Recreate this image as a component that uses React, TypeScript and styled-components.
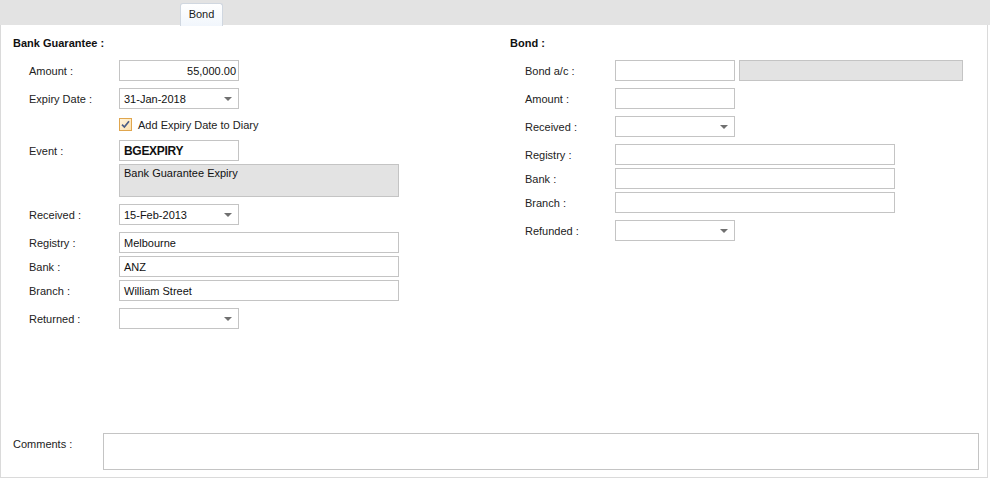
import React from "react";
import styled, { createGlobalStyle } from "styled-components";

const GlobalStyle = createGlobalStyle`
  html, body {
    margin: 0;
    padding: 0;
    background: #ffffff;
  }
  body {
    font-family: "Liberation Sans", Arial, sans-serif;
    font-size: 11px;
    color: #1f1f1f;
  }
`;

const Screen = styled.div`
  width: 990px;
  height: 478px;
  display: flex;
  flex-direction: column;
  background: #ffffff;
  overflow: hidden;
`;

const TabStrip = styled.div`
  height: 25px;
  flex: none;
  background: #e3e3e3;
  display: flex;
  align-items: flex-end;
  padding-left: 180px;
  box-sizing: border-box;
`;

const Tab = styled.div`
  width: 43px;
  height: 23px;
  box-sizing: border-box;
  border: 1px solid #d0d7e0;
  border-bottom: none;
  border-radius: 3px 3px 0 0;
  background: linear-gradient(#ffffff, #f1f6fc);
  display: flex;
  align-items: center;
  justify-content: center;
  padding-bottom: 2px;
  color: #1a1a1a;
  margin-bottom: -1px;
  position: relative;
  z-index: 1;
`;

const Panel = styled.div`
  flex: 1;
  margin-right: 2px;
  border: 1px solid #dadada;
  border-top: none;
  display: flex;
  flex-direction: column;
  padding-bottom: 7px;
`;

const Columns = styled.div`
  display: flex;
  flex: 1;
`;

const Column = styled.div<{ $width?: number; $pad: number }>`
  ${(p) => (p.$width ? `width: ${p.$width}px;` : "flex: 1;")}
  flex-shrink: 0;
  box-sizing: border-box;
  padding: 12px 0 0 ${(p) => p.$pad}px;
  display: flex;
  flex-direction: column;
`;

const SectionTitle = styled.div`
  font-weight: bold;
  height: 13px;
  line-height: 13px;
  color: #111;
  margin-bottom: 10px;
`;

const Row = styled.div<{ $top?: number; $h?: number; $indent?: number }>`
  display: flex;
  align-items: center;
  margin-top: ${(p) => p.$top ?? 0}px;
  height: ${(p) => p.$h ?? 21}px;
  padding-left: ${(p) => p.$indent ?? 16}px;
`;

const Label = styled.div`
  width: 90px;
  flex: none;
  color: #222;
`;

const Spacer = styled.div`
  width: 90px;
  flex: none;
`;

const Field = styled.div<{
  $w: number;
  $h?: number;
  $grey?: boolean;
  $right?: boolean;
  $bold?: boolean;
  $top?: boolean;
}>`
  width: ${(p) => p.$w}px;
  height: ${(p) => p.$h ?? 21}px;
  box-sizing: border-box;
  border: 1px solid #c4c4c4;
  background: ${(p) => (p.$grey ? "#e3e3e3" : "#ffffff")};
  display: flex;
  align-items: ${(p) => (p.$top ? "flex-start" : "center")};
  justify-content: ${(p) => (p.$right ? "flex-end" : "flex-start")};
  padding: ${(p) => (p.$top ? "2px 4px" : p.$right ? "0 2px 0 4px" : "0 4px")};
  font-weight: ${(p) => (p.$bold ? "bold" : "normal")};
  font-size: ${(p) => (p.$bold ? "12px" : "11px")};
  letter-spacing: ${(p) => (p.$bold ? "-0.3px" : "0")};
  color: #111;
  white-space: nowrap;
  flex: none;
`;

const ComboBox = styled(Field)`
  justify-content: space-between;
  padding-right: 6px;
`;

const Arrow = styled.span`
  width: 0;
  height: 0;
  border-left: 4px solid transparent;
  border-right: 4px solid transparent;
  border-top: 4px solid #707070;
`;

const Gap = styled.div`
  width: 4px;
  flex: none;
`;

const CheckBox = styled.span`
  width: 13px;
  height: 13px;
  box-sizing: border-box;
  border: 1px solid #e0a64e;
  background: linear-gradient(135deg, #fff4dc, #fde2b0);
  display: inline-flex;
  align-items: center;
  justify-content: center;
  margin-right: 6px;
  flex: none;
`;

const CheckText = styled.span`
  color: #222;
`;

const CommentsRow = styled.div`
  display: flex;
  align-items: flex-start;
  padding-left: 12px;
`;

const CommentsLabel = styled(Label)`
  padding-top: 5px;
`;

const CommentsBox = styled.div`
  width: 876px;
  height: 37px;
  box-sizing: border-box;
  border: 1px solid #c4c4c4;
  background: #fff;
`;

function Combo({ w, value }: { w: number; value?: string }) {
  return (
    <ComboBox $w={w}>
      <span>{value ?? ""}</span>
      <Arrow />
    </ComboBox>
  );
}

function Check() {
  return (
    <CheckBox>
      <svg width="9" height="9" viewBox="0 0 9 9">
        <path
          d="M1 4.6 L3.4 7 L8 1.3"
          fill="none"
          stroke="#4a5d86"
          strokeWidth="1.7"
        />
      </svg>
    </CheckBox>
  );
}

export default function App() {
  return (
    <Screen>
      <GlobalStyle />
      <TabStrip>
        <Tab>Bond</Tab>
      </TabStrip>
      <Panel>
        <Columns>
          <Column $width={496} $pad={12}>
            <SectionTitle>Bank Guarantee :</SectionTitle>
            <Row>
              <Label>Amount :</Label>
              <Field $w={120} $right>
                55,000.00
              </Field>
            </Row>
            <Row $top={7}>
              <Label>Expiry Date :</Label>
              <Combo w={120} value="31-Jan-2018" />
            </Row>
            <Row $top={9} $h={13}>
              <Spacer />
              <Check />
              <CheckText>Add Expiry Date to Diary</CheckText>
            </Row>
            <Row $top={9}>
              <Label>Event :</Label>
              <Field $w={120} $bold>
                BGEXPIRY
              </Field>
            </Row>
            <Row $top={3} $h={33}>
              <Spacer />
              <Field $w={280} $h={33} $grey $top>
                Bank Guarantee Expiry
              </Field>
            </Row>
            <Row $top={7}>
              <Label>Received :</Label>
              <Combo w={120} value="15-Feb-2013" />
            </Row>
            <Row $top={7}>
              <Label>Registry :</Label>
              <Field $w={280}>Melbourne</Field>
            </Row>
            <Row $top={3}>
              <Label>Bank :</Label>
              <Field $w={280}>ANZ</Field>
            </Row>
            <Row $top={3}>
              <Label>Branch :</Label>
              <Field $w={280}>William Street</Field>
            </Row>
            <Row $top={7}>
              <Label>Returned :</Label>
              <Combo w={120} />
            </Row>
          </Column>
          <Column $pad={13}>
            <SectionTitle>Bond :</SectionTitle>
            <Row $indent={15}>
              <Label>Bond a/c :</Label>
              <Field $w={120} />
              <Gap />
              <Field $w={224} $grey />
            </Row>
            <Row $top={7} $indent={15}>
              <Label>Amount :</Label>
              <Field $w={120} />
            </Row>
            <Row $top={7} $indent={15}>
              <Label>Received :</Label>
              <Combo w={120} />
            </Row>
            <Row $top={7} $indent={15}>
              <Label>Registry :</Label>
              <Field $w={280} />
            </Row>
            <Row $top={3} $indent={15}>
              <Label>Bank :</Label>
              <Field $w={280} />
            </Row>
            <Row $top={3} $indent={15}>
              <Label>Branch :</Label>
              <Field $w={280} />
            </Row>
            <Row $top={7} $indent={15}>
              <Label>Refunded :</Label>
              <Combo w={120} />
            </Row>
          </Column>
        </Columns>
        <CommentsRow>
          <CommentsLabel>Comments :</CommentsLabel>
          <CommentsBox />
        </CommentsRow>
      </Panel>
    </Screen>
  );
}
